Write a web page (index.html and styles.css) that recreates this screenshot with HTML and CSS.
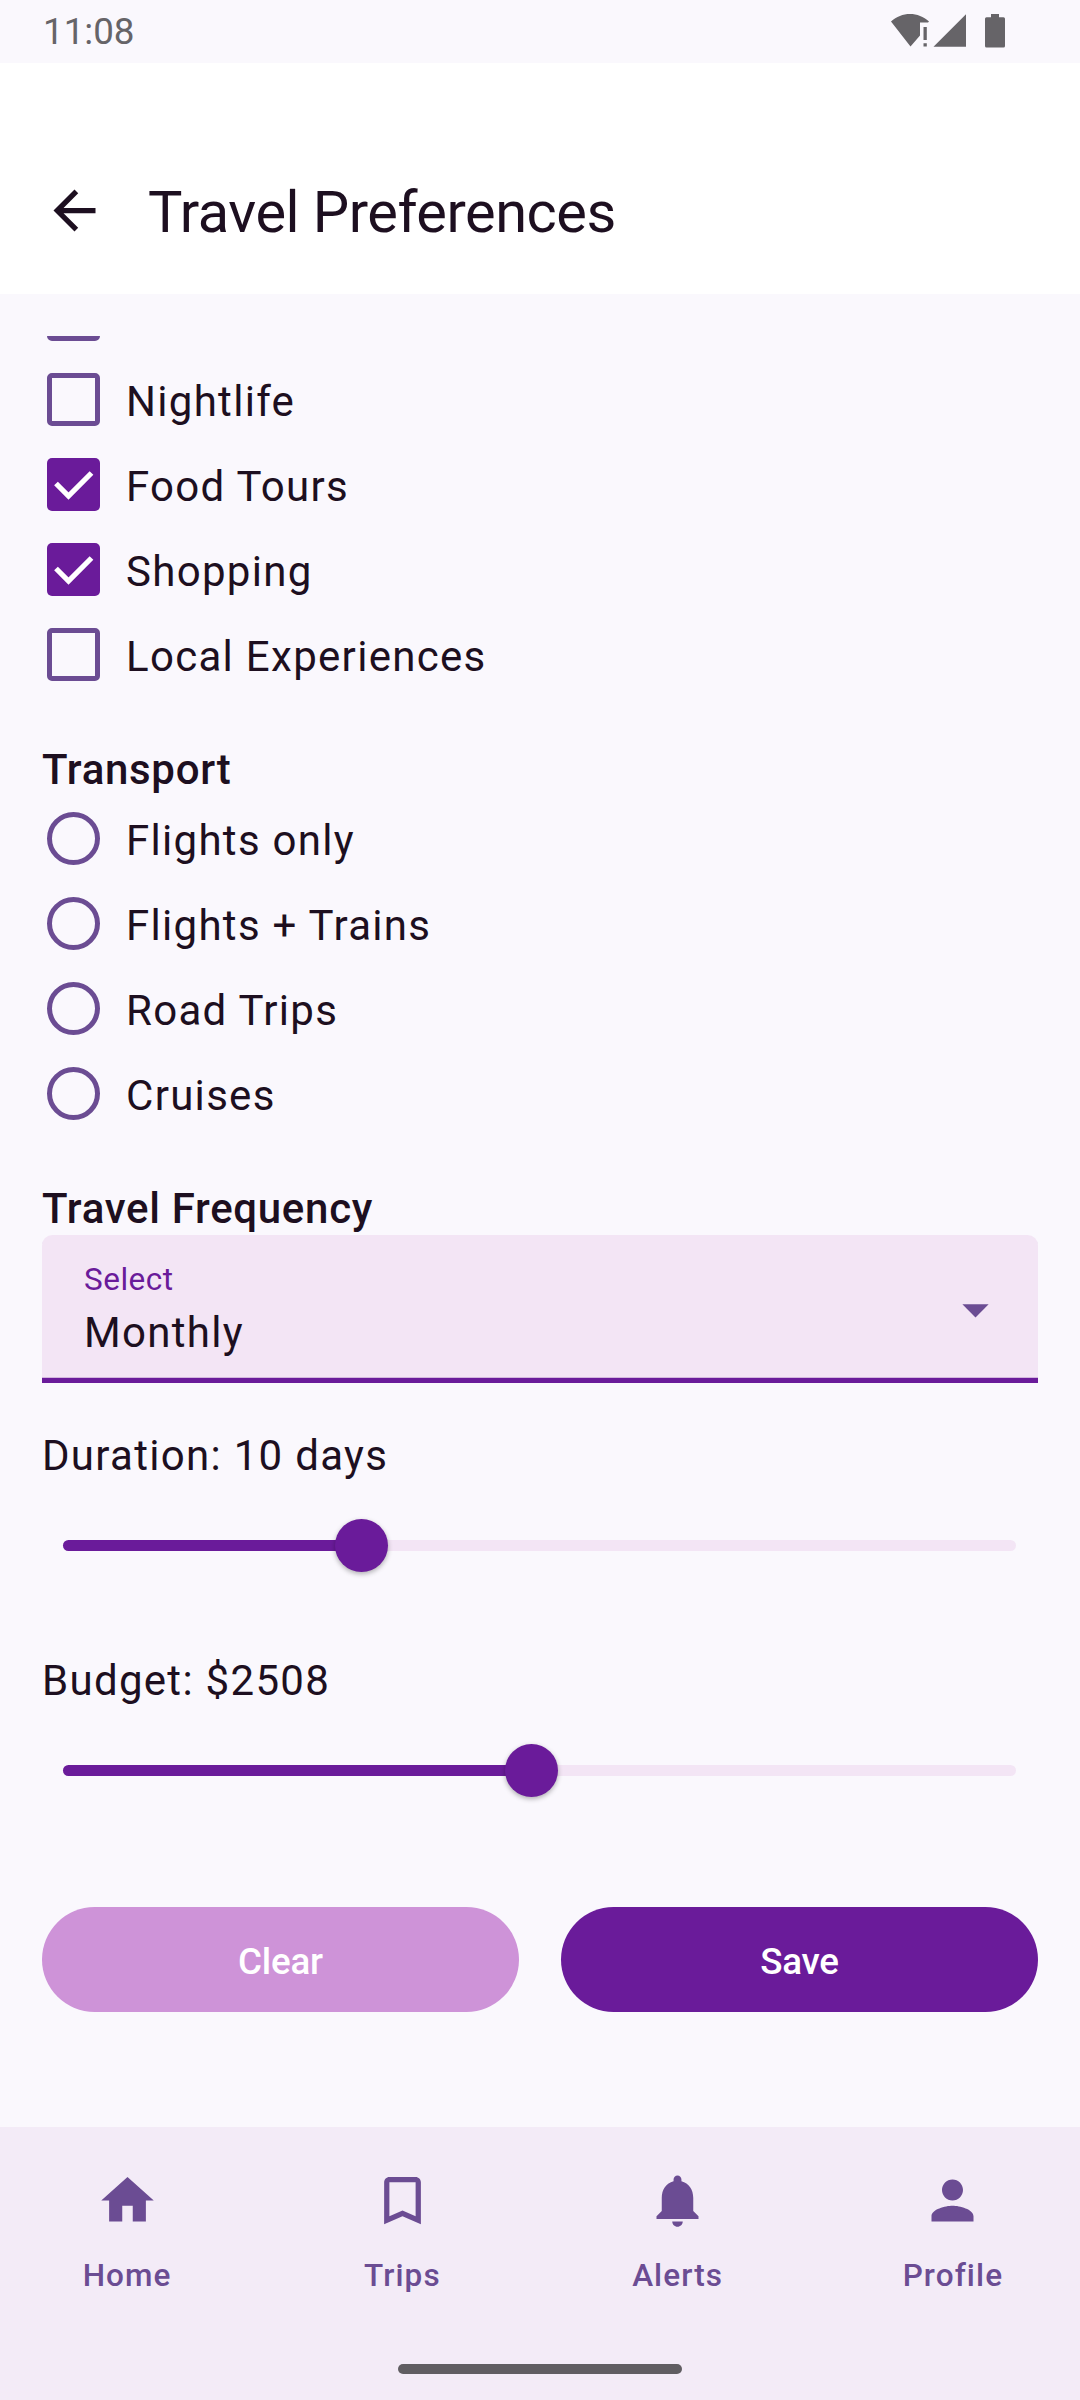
FILE: index.html
```html
<!DOCTYPE html>
<html lang="en">
<head>
<meta charset="utf-8">
<title>Travel Preferences</title>
<link rel="stylesheet" href="styles.css">
</head>
<body>
<div class="screen">
  <div class="status-bar">
    <span class="clock">11:08</span>
    <svg class="status-icons" viewBox="0 0 120 36" aria-hidden="true">
      <path d="M1 9.500C6.500 4.500 13 2 20 2s13.500 2.500 19 7.500L38 10.500H30V23.500L20.500 34.500z"/>
      <path d="M33.500 15h3.300v13h-3.300zM33.500 31.200h3.300v3.300h-3.300z"/>
      <path d="M76 2.200V34.700H43.500z"/>
      <path d="M101 2h8v3.300h4.500q1.500 0 1.500 1.500v27.200q0 1.500-1.500 1.500h-17q-1.500 0-1.500-1.500V6.800q0-1.500 1.500-1.500h4.500z"/>
    </svg>
  </div>

  <header class="app-bar">
    <svg class="icon" viewBox="0 0 24 24" aria-label="Back"><path d="M20 11H7.830l5.590-5.590L12 4l-8 8 8 8 1.410-1.410L7.830 13H20v-2z"/></svg>
    <h1 class="title">Travel Preferences</h1>
  </header>

  <main class="content">
    <div class="viewport">
      <div class="options options-scrolled">
        <div class="option"><span class="box"></span></div>
        <div class="option"><span class="box"></span><span class="label">Nightlife</span></div>
        <div class="option"><span class="box checked"><svg class="tick" viewBox="0 0 53 53"><path d="M9 25.500 21.500 38 44.500 15"/></svg></span><span class="label">Food Tours</span></div>
        <div class="option"><span class="box checked"><svg class="tick" viewBox="0 0 53 53"><path d="M9 25.500 21.500 38 44.500 15"/></svg></span><span class="label">Shopping</span></div>
        <div class="option"><span class="box"></span><span class="label">Local Experiences</span></div>
      </div>

      <h2 class="section-title">Transport</h2>
      <div class="options">
        <div class="option"><span class="box radio"></span><span class="label">Flights only</span></div>
        <div class="option"><span class="box radio"></span><span class="label">Flights + Trains</span></div>
        <div class="option"><span class="box radio"></span><span class="label">Road Trips</span></div>
        <div class="option"><span class="box radio"></span><span class="label">Cruises</span></div>
      </div>

      <h2 class="section-title">Travel Frequency</h2>
      <div class="select">
        <div class="select-text">
          <span class="select-label">Select</span>
          <span class="select-value">Monthly</span>
        </div>
        <svg class="icon" viewBox="0 0 24 24" aria-hidden="true"><path d="M7 10l5 5 5-5z"/></svg>
      </div>

      <p class="slider-label duration">Duration: 10 days</p>
      <div class="slider"><div class="track"><div class="fill" style="width:31.35%"><span class="thumb"></span></div></div></div>

      <p class="slider-label budget">Budget: $2508</p>
      <div class="slider"><div class="track"><div class="fill" style="width:49.2%"><span class="thumb"></span></div></div></div>

      <div class="actions">
        <button class="button clear">Clear</button>
        <button class="button save">Save</button>
      </div>
    </div>
  </main>

  <footer class="bottom">
    <nav class="nav">
      <div class="nav-item"><svg class="icon" viewBox="0 0 24 24"><path d="M10 20v-6h4v6h5v-8h3L12 3 2 12h3v8z"/></svg><span>Home</span></div>
      <div class="nav-item"><svg class="icon" viewBox="0 0 24 24"><path d="M17 3H7c-1.100 0-1.990.9-1.990 2L5 21l7-3 7 3V5c0-1.100-.9-2-2-2zm0 15l-5-2.180L7 18V5h10v13z"/></svg><span>Trips</span></div>
      <div class="nav-item"><svg class="icon" viewBox="0 0 24 24"><path d="M12 22c1.100 0 2-.9 2-2h-4c0 1.100.89 2 2 2zm6-6v-5c0-3.070-1.640-5.640-4.500-6.320V4c0-.83-.67-1.500-1.500-1.500s-1.500.67-1.500 1.500v.68C7.630 5.360 6 7.920 6 11v5l-2 2v1h16v-1l-2-2z"/></svg><span>Alerts</span></div>
      <div class="nav-item"><svg class="icon" viewBox="0 0 24 24"><path d="M12 12c2.210 0 4-1.790 4-4s-1.790-4-4-4-4 1.790-4 4 1.790 4 4 4zm0 2c-2.670 0-8 1.340-8 4v2h16v-2c0-2.660-5.330-4-8-4z"/></svg><span>Profile</span></div>
    </nav>
    <div class="gesture-handle"></div>
  </footer>
</div>
</body>
</html>
```
FILE: styles.css
```css
* {
  box-sizing: border-box;
}

body,
h1,
h2,
p {
  margin: 0;
}

body {
  font-family: Roboto, sans-serif;
  font-size: 42px;
  line-height: 63px;
  letter-spacing: 1.3px;
  color: #1d0f20;
  background: #faf8fd;
}

.screen {
  display: flex;
  flex-direction: column;
  width: 1080px;
  height: 2400px;
  overflow: hidden;
}

.icon {
  display: block;
  flex: none;
  width: 63px;
  height: 63px;
  fill: currentColor;
}

/* Status bar */
.status-bar {
  display: flex;
  justify-content: space-between;
  height: 63px;
  padding: 0 70px 0 43px;
  color: #666468;
}

.clock {
  font-size: 36.75px;
  line-height: 63px;
  letter-spacing: 0;
}

.status-icons {
  width: 120px;
  height: 36px;
  margin-top: 12px;
  fill: currentColor;
}

/* App bar */
.app-bar {
  display: flex;
  align-items: center;
  gap: 42px;
  height: 231px;
  padding: 64px 43px 0;
  background: #fff;
}

.title {
  padding-top: 3px;
  font-size: 57.75px;
  font-weight: 400;
  line-height: 74px;
  letter-spacing: -0.5px;
}

/* Scrolling form */
.content {
  flex: 1;
  min-height: 0;
  padding: 42px 42px 0;
}

.viewport {
  height: 100%;
  overflow: hidden;
}

.options-scrolled {
  margin-top: -64px;
}

.option {
  display: flex;
  align-items: center;
  gap: 26px;
  height: 85px;
  padding-left: 5px;
}

.label {
  padding-top: 4px;
}

.box {
  flex: none;
  width: 53px;
  height: 53px;
  border: 5px solid #6b4c93;
  border-radius: 5px;
}

.box.checked {
  border: 0;
  background: #6a1b9a;
}

.box.radio {
  border-radius: 50%;
}

.tick {
  display: block;
  width: 53px;
  height: 53px;
  fill: none;
  stroke: #fff;
  stroke-width: 5.25px;
}

.section-title {
  margin-top: 46px;
  font-size: 42px;
  font-weight: 500;
  line-height: 53px;
  letter-spacing: 0.7px;
}

.select {
  display: flex;
  justify-content: space-between;
  height: 148px;
  padding: 24px 31px 0 42px;
  border-bottom: 5px solid #6a1b9a;
  border-radius: 10.5px 10.5px 0 0;
  background: #f3e5f5;
  box-shadow: inset 0 -1px #d3b6de;
}

.select-text {
  display: flex;
  flex-direction: column;
}

.select-label {
  font-size: 31.5px;
  line-height: 42px;
  letter-spacing: 0.5px;
  color: #6a1b9a;
}

.select .icon {
  margin-top: 19px;
  color: #6b4c93;
}

.duration {
  margin-top: 41px;
}

.budget {
  margin-top: 45px;
}

.slider {
  display: flex;
  align-items: center;
  height: 117px;
  padding: 0 22px 0 21px;
}

.track {
  flex: 1;
  height: 11px;
  border-radius: 6px;
  background: #f3e5f5;
}

.fill {
  position: relative;
  height: 11px;
  border-radius: 6px;
  background: #6a1b9a;
}

.thumb {
  position: absolute;
  top: -21px;
  right: -26px;
  width: 53px;
  height: 53px;
  border-radius: 50%;
  background: #6a1b9a;
  box-shadow: 0 2px 5px rgba(0, 0, 0, 0.3);
}

.actions {
  display: flex;
  gap: 42px;
  margin-top: 78px;
}

.button {
  flex: 1;
  height: 105px;
  padding: 4px 0 0;
  border: 0;
  border-radius: 53px;
  font: 500 36.75px/52px Roboto, sans-serif;
  letter-spacing: -0.2px;
  color: #fff;
}

.clear {
  background: #ce93d8;
}

.save {
  background: #6a1b9a;
}

/* Bottom navigation */
.bottom {
  display: flex;
  flex-direction: column;
  align-items: center;
  justify-content: space-between;
  height: 273px;
  padding: 42px 0 26px;
  background: #f3ebf7;
}

.nav {
  display: flex;
  gap: 21px;
  width: 100%;
}

.nav-item {
  display: flex;
  flex: 1;
  flex-direction: column;
  align-items: center;
  gap: 23px;
  font-size: 31.5px;
  font-weight: 500;
  line-height: 42px;
  letter-spacing: 1.1px;
  color: #6b4c93;
}

.gesture-handle {
  width: 284px;
  height: 10px;
  border-radius: 5px;
  background: #605d62;
}
```
